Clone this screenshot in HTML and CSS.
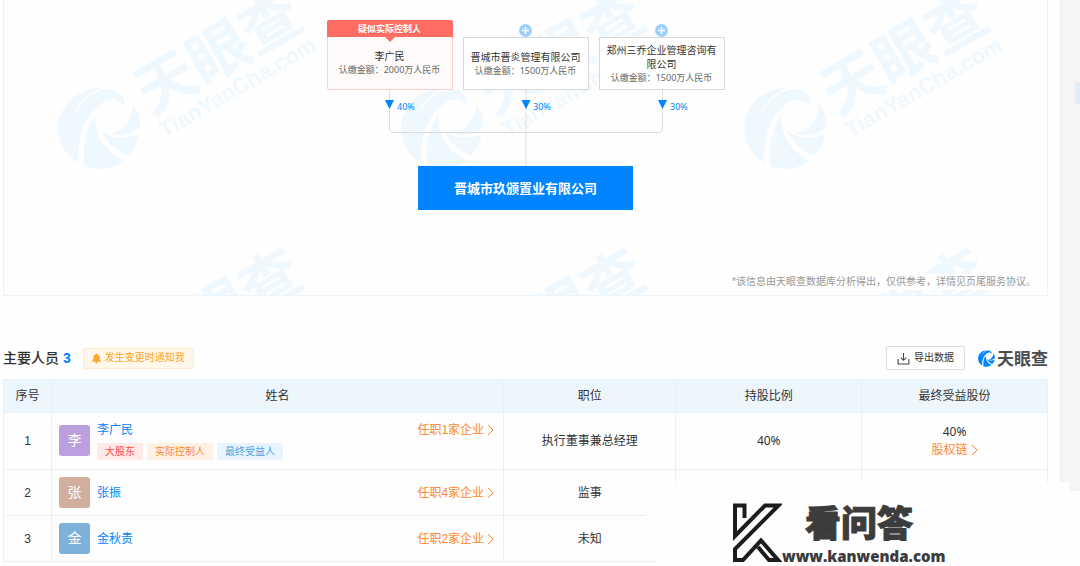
FILE: index.html
```html
<!DOCTYPE html>
<html lang="zh-CN">
<head>
<meta charset="utf-8">
<title>晋城市玖颁置业有限公司</title>
<link rel="stylesheet" href="styles.css">
</head>
<body>
<svg class="defs" aria-hidden="true">
  <symbol id="swirl" viewBox="170 260 252 252">
    <path d="M305 262C225 262 171 320 171 385C171 430 195 470 233 490C228 430 240 365 285 325C310 295 345 285 372 320C376 285 350 264 315 267C275 275 250 300 218 342C235 305 265 275 305 262Z"/>
    <path d="M283 345C255 385 244 440 250 500C290 516 335 510 369 484C315 455 280 410 283 345Z"/>
    <path d="M299 388C320 412 365 423 414 405C412 430 400 452 383 467C345 455 315 425 299 388Z"/>
    <path d="M398 312C395 360 370 392 328 402C360 412 400 404 420 378C420 350 412 328 398 312Z"/>
  </symbol>
</svg>
<main class="page">
  <section class="panel">
    <svg class="watermark" aria-hidden="true">
      <defs>
        <pattern id="mark" x="0" y="-16" width="343" height="258" patternUnits="userSpaceOnUse">
          <use href="#swirl" x="54" y="103" width="83" height="83"/>
          <g transform="rotate(-30 147 132)">
            <text class="mark-name" x="147" y="132">天眼查</text>
            <text class="mark-url" x="148" y="158">TianYanCha.com</text>
          </g>
        </pattern>
      </defs>
      <rect width="100%" height="100%" fill="url(#mark)"/>
    </svg>
    <div class="chart">
      <div class="holders">
        <div class="holder controller">
          <div class="role">疑似实际控制人</div>
          <div class="holder-body">
            <div class="name">李广民</div>
            <div class="amount">认缴金额：2000万人民币</div>
          </div>
        </div>
        <div class="holder">
          <button class="expand" aria-label="展开"><svg viewBox="0 0 13 13"><circle cx="6.5" cy="6.5" r="6.5"/><path d="M6.5 3v7M3 6.5h7"/></svg></button>
          <div class="holder-body">
            <div class="name">晋城市晋炎管理有限公司</div>
            <div class="amount">认缴金额：1500万人民币</div>
          </div>
        </div>
        <div class="holder">
          <button class="expand" aria-label="展开"><svg viewBox="0 0 13 13"><circle cx="6.5" cy="6.5" r="6.5"/><path d="M6.5 3v7M3 6.5h7"/></svg></button>
          <div class="holder-body">
            <div class="name">郑州三乔企业管理咨询有限公司</div>
            <div class="amount">认缴金额：1500万人民币</div>
          </div>
        </div>
      </div>
      <svg class="links" viewBox="0 0 398 76">
        <path class="wire" d="M62.5 0V38Q62.5 42.5 67 42.5H331Q335.500 42.5 335.500 38V0"/>
        <path class="wire" d="M199 0V76"/>
        <path class="tip" d="M58 10h9l-4.500 9zM194.500 10h9l-4.500 9zM331 10h9l-4.500 9z"/>
        <text x="70" y="20">40%</text>
        <text x="206" y="20">30%</text>
        <text x="343" y="20">30%</text>
      </svg>
      <div class="company">晋城市玖颁置业有限公司</div>
    </div>
    <p class="note"><span>*该信息由天眼查数据库分析得出，仅供参考，详情见页尾服务协议。</span></p>
  </section>

  <section class="staff">
    <header class="bar">
      <h2>主要人员 <span>3</span></h2>
      <button class="notify">
        <svg viewBox="0 0 10 11"><path d="M5 0a1 1 0 0 1 1 1c2 .5 2.600 2 2.600 4v2L10 8.500v.5H0v-.5L1.400 7V5c0-2 .6-3.500 2.600-4a1 1 0 0 1 1-1zM3.500 9.500h3a1.500 1.500 0 0 1-3 0z"/></svg>
        发生变更时通知我
      </button>
      <button class="export">
        <svg viewBox="0 0 12 12"><path d="M6 1v6.500M3.500 5.200L6 7.700l2.500-2.500M1 6.500V11h10V6.500"/></svg>
        导出数据
      </button>
      <div class="brand"><svg><use href="#swirl"/></svg>天眼查</div>
    </header>
    <table>
      <colgroup><col class="c-no"><col class="c-name"><col class="c-job"><col class="c-share"><col class="c-share"></colgroup>
      <thead>
        <tr><th>序号</th><th>姓名</th><th>职位</th><th>持股比例</th><th>最终受益股份</th></tr>
      </thead>
      <tbody>
        <tr class="tall">
          <td>1</td>
          <td><div class="person">
            <span class="avatar violet">李</span>
            <div class="who"><a href="#">李广民</a>
              <div class="tags"><span class="tag red">大股东</span><span class="tag orange">实际控制人</span><span class="tag blue">最终受益人</span></div>
            </div>
            <a class="more" href="#">任职1家企业<svg viewBox="0 0 7 12"><path d="M1 1l5 5-5 5"/></svg></a>
          </div></td>
          <td>执行董事兼总经理</td>
          <td class="share">40%</td>
          <td class="share">40%<br><a class="more" href="#">股权链<svg viewBox="0 0 7 12"><path d="M1 1l5 5-5 5"/></svg></a></td>
        </tr>
        <tr>
          <td>2</td>
          <td><div class="person">
            <span class="avatar tan">张</span>
            <div class="who"><a href="#">张振</a></div>
            <a class="more" href="#">任职4家企业<svg viewBox="0 0 7 12"><path d="M1 1l5 5-5 5"/></svg></a>
          </div></td>
          <td>监事</td><td></td><td></td>
        </tr>
        <tr>
          <td>3</td>
          <td><div class="person">
            <span class="avatar sky">金</span>
            <div class="who"><a href="#">金秋贵</a></div>
            <a class="more" href="#">任职2家企业<svg viewBox="0 0 7 12"><path d="M1 1l5 5-5 5"/></svg></a>
          </div></td>
          <td>未知</td><td></td><td></td>
        </tr>
      </tbody>
    </table>
  </section>
</main>
<div class="side-tab"></div>
<aside class="stamp">
  <svg viewBox="0 0 50 62">
    <path d="M12.500 16V3.500H3V34L33 3.500H46.500L3 47V58H11L29 38.500L46 58H37L26 45"/>
  </svg>
  <div class="stamp-text">
    <strong>看问答</strong>
    <span>www.kanwenda.com</span>
  </div>
</aside>
</body>
</html>
```
FILE: styles.css
```css
* { box-sizing: border-box; }

body {
  position: relative;
  min-height: 100vh;
  margin: 0;
  padding-right: 19px;
  overflow: hidden;
  background: #f5f5f5;
  color: #333;
  font: 12px/18px "Liberation Sans", "Noto Sans CJK SC", sans-serif;
}

a { color: #0084ff; text-decoration: none; }

button {
  padding: 0;
  border: 0;
  background: none;
  font: inherit;
}

.defs { position: absolute; width: 0; height: 0; }

.page {
  min-height: 100vh;
  padding: 0 12px 0 3px;
  border-right: 1px solid #ececec;
  background: #fefefe;
}

/* Ownership chart */
.panel {
  position: relative;
  padding-top: 20px;
  border: 1px solid #eaf4fd;
  border-top: 0;
}

.watermark {
  position: absolute;
  inset: 0;
  width: 100%;
  height: 100%;
  fill: #eff7ff;
}

.mark-name { font: bold 60px "Noto Sans CJK SC", sans-serif; }
.mark-url { font: bold 22px "Liberation Sans", sans-serif; }

.chart {
  position: relative;
  display: flex;
  flex-direction: column;
  align-items: center;
  font-family: "Noto Sans", "Noto Sans CJK SC", sans-serif;
}

.holders { display: flex; align-items: flex-end; gap: 10px; }

.holder {
  position: relative;
  display: flex;
  flex-direction: column;
  width: 126px;
  min-height: 53px;
  border: 1px solid #d8d8d8;
  background: #fff;
  text-align: center;
}

.holder-body {
  display: flex;
  flex: 1;
  flex-direction: column;
  justify-content: center;
  padding: 0 6px;
}

.controller {
  min-height: 70px;
  border: 1px solid #ffd0cc;
  border-radius: 2px;
  background: #fffafa;
}

.role {
  position: relative;
  margin: -1px -1px 0;
  border-radius: 2px 2px 0 0;
  background: #ff6c64;
  color: #fff;
  font-size: 9px;
  font-weight: bold;
  line-height: 17px;
}

.role::after {
  content: "";
  position: absolute;
  top: 100%;
  left: 50%;
  margin-left: -5px;
  border: 5px solid transparent;
  border-top-color: #ff6c64;
  border-bottom: 0;
}

.name { font-size: 10px; line-height: 14px; }
.amount { color: #666; font-size: 9px; line-height: 14px; white-space: nowrap; }

.expand {
  position: absolute;
  top: -14px;
  left: 50%;
  width: 13px;
  height: 13px;
  margin-left: -7px;
}

.expand svg { display: block; fill: #9ccfff; stroke: none; }
.expand path { stroke: #fff; stroke-width: 1.5; }

.links { display: block; width: 398px; height: 76px; }
.links text { fill: #0084ff; font-size: 9px; }
.wire { fill: none; stroke: #dcdcdc; }
.tip { fill: #0084ff; }

.company {
  padding: 0 36px;
  background: #0084ff;
  color: #fff;
  font-size: 13px;
  font-weight: bold;
  line-height: 44px;
}

.note {
  position: relative;
  margin: 64px 11px 5px;
  color: #999;
  font-size: 10px;
  line-height: 16px;
  text-align: right;
}

.note span { display: inline-block; background: #fefefe; }

/* Staff table */
.bar {
  display: flex;
  align-items: center;
  height: 42px;
  margin-top: 41px;
}

h2 { margin: 0 12px 0 0; font-size: 14px; font-weight: 500; }
h2 span { color: #0084ff; font-weight: bold; }

.notify, .export {
  display: flex;
  align-items: center;
  gap: 4px;
  border: 1px solid #ffebcc;
  border-radius: 2px;
  font-size: 10px;
}

.notify {
  height: 21px;
  padding: 0 8px;
  background: #fff7ea;
  color: #ffa52b;
}

.notify svg { width: 9px; height: 11px; fill: #ffa52b; }

.export {
  height: 24px;
  margin-left: auto;
  padding: 0 10px;
  border-color: #dedede;
  background: #fff;
  color: #333;
}

.export svg { width: 13px; height: 13px; fill: none; stroke: #444; }

.brand {
  display: flex;
  align-items: center;
  gap: 2px;
  margin-left: 13px;
  color: #4b4d52;
  font: bold 17px/20px "Noto Sans CJK SC", sans-serif;
}

.brand svg { width: 17px; height: 17px; fill: #0084ff; }

table {
  width: 100%;
  border-collapse: collapse;
  table-layout: fixed;
  text-align: center;
}

.c-no { width: 4.6%; }
.c-name { width: 43.3%; }
.c-job { width: 16.5%; }
.c-share { width: 17.8%; }

th, td { padding: 0; border: 1px solid #e6f0fa; }
th { height: 33px; background: #eef6fd; font-weight: 400; }
td { height: 46px; }
.tall td { height: 57px; }

.share { font-family: "Noto Sans", "Noto Sans CJK SC", sans-serif; }

.person { display: flex; align-items: center; padding: 0 9px 0 7px; text-align: left; }
.tall .person { padding-bottom: 2px; }
.who { flex: 1; margin-left: 7px; }

.avatar {
  width: 31px;
  border-radius: 3px;
  color: #fff;
  font-size: 14px;
  line-height: 31px;
  text-align: center;
}

.violet { background: #bb9fdf; }
.tan { background: #d2ae9e; }
.sky { background: #7db1d9; }

.tags { display: flex; gap: 4px; margin-top: 4px; }
.tag { padding: 0 8px; border-radius: 2px; font-size: 10px; line-height: 17px; }
.red { background: #ffe9e9; color: #ff4b3e; }
.orange { background: #fff0e4; color: #ff8a26; }
.blue { background: #eaf4ff; color: #4d9fe0; }

.more { display: inline-flex; align-items: center; gap: 3px; color: #ff8833; }
.more svg { width: 7px; height: 12px; fill: none; stroke: #ff8833; }
.person .more { align-self: flex-start; }
tr:not(.tall) .person .more { align-self: center; }

/* Overlays */
.side-tab {
  position: absolute;
  top: 82px;
  right: 0;
  width: 5px;
  height: 22px;
  border-radius: 2px 0 0 2px;
  background: #e1edf8;
}

.stamp {
  position: absolute;
  right: 0;
  bottom: 0;
  display: flex;
  align-items: flex-start;
  width: 434px;
  height: 84px;
  padding: 20px 0 0 86px;
  background: #fefefe;
  clip-path: polygon(0 0, 424px 0, 424px 9px, 100% 9px, 100% 100%, 10px 100%, 10px 60px, 0 60px);
}

.stamp svg { width: 50px; height: 62px; fill: none; stroke: #1c1c1c; stroke-width: 4; }
.stamp-text { display: flex; flex-direction: column; color: #3c3c3c; }

.stamp strong {
  margin-left: 23px;
  font-size: 36px;
  font-weight: 900;
  line-height: 46px;
  -webkit-text-stroke: 1px #3c3c3c;
}

.stamp span { font: 800 15px/16px "Open Sans", sans-serif; }
```
